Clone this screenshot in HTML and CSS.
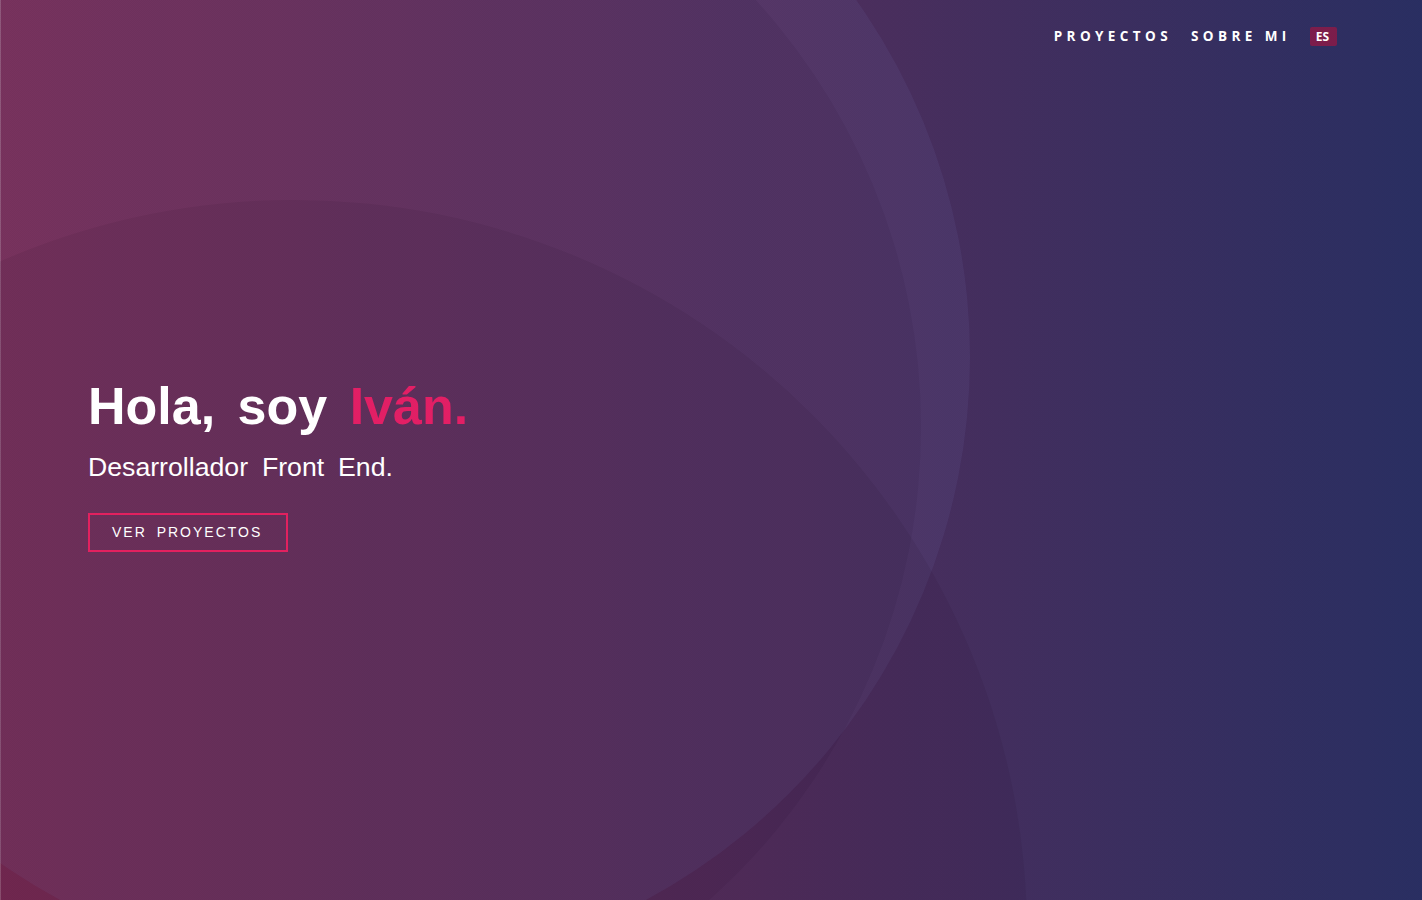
FILE: index.html
```html
<!DOCTYPE html>
<html lang="es">
<head>
<meta charset="utf-8">
<title>Iván — Desarrollador Front End</title>
<link rel="stylesheet" href="styles.css">
</head>
<body>
<section class="hero">
  <div class="shape shape-light"></div>
  <div class="shape shape-shadow"></div>
  <div class="shape shape-big"></div>

  <header class="topbar">
    <nav class="nav">
      <a class="nav-link" href="#proyectos">PROYECTOS</a>
      <a class="nav-link" href="#sobre-mi">SOBRE MI</a>
      <span class="lang">ES</span>
    </nav>
  </header>

  <div class="intro">
    <h1 class="title">Hola, soy <span class="accent">Iván.</span></h1>
    <p class="subtitle">Desarrollador Front End.</p>
    <a class="btn" href="#proyectos">VER PROYECTOS</a>
  </div>
</section>
</body>
</html>
```

FILE: styles.css
```css
* {
  box-sizing: border-box;
}

html, body {
  margin: 0;
  padding: 0;
}

body {
  font-family: "Liberation Sans", Arial, sans-serif;
  color: #fff;
  background: #272f60;
}

.hero {
  position: relative;
  height: 900px;
  overflow: hidden;
  background: linear-gradient(90deg, #7f2e57 0%, #2a2f63 100%);
  box-shadow: inset 1px 0 0 rgba(255, 255, 255, 0.22);
}

.hero::after {
  content: "";
  position: absolute;
  inset: 0;
  pointer-events: none;
  background: repeating-conic-gradient(rgba(0, 0, 0, 0.03) 0 25%, transparent 0 50%) 0 0 / 2px 2px;
}

.shape {
  position: absolute;
  border-radius: 50%;
  pointer-events: none;
}

.shape-light {
  left: -264px;
  top: -260px;
  width: 1234px;
  height: 1234px;
  background: rgba(135, 155, 215, 0.085);
}

.shape-shadow {
  left: -347px;
  top: -207px;
  width: 1268px;
  height: 1268px;
  background: rgba(30, 0, 40, 0.07);
}

.shape-big {
  left: -439px;
  top: 200px;
  width: 1466px;
  height: 1466px;
  background: rgba(30, 0, 25, 0.07);
}

.topbar {
  position: relative;
  z-index: 2;
  display: flex;
  justify-content: flex-end;
  padding: 25px 85px 0 0;
}

.nav {
  display: flex;
  align-items: center;
  height: 21px;
}

.nav-link {
  font-family: "Open Sans", "Liberation Sans", sans-serif;
  font-weight: 700;
  font-size: 13.5px;
  letter-spacing: 4.4px;
  color: #fff;
  text-decoration: none;
  margin-right: 19px;
  line-height: 20px;
}

.lang {
  font-family: "Open Sans", "Liberation Sans", sans-serif;
  font-weight: 700;
  font-size: 12px;
  line-height: 19px;
  padding: 0 8px 0 6px;
  margin-top: 2px;
  background: #7c1d4b;
  border-radius: 2px;
  color: #fff;
}

.intro {
  position: relative;
  z-index: 2;
  padding: 330px 0 0 88px;
  display: flex;
  flex-direction: column;
  align-items: flex-start;
}

.title {
  margin: 0;
  font-size: 52px;
  line-height: 60px;
  font-weight: 700;
  word-spacing: 8px;
  color: #fff;
}

.accent {
  color: #e21f65;
}

.subtitle {
  margin: 15px 0 0;
  font-size: 26.67px;
  line-height: 32px;
  font-weight: 400;
  word-spacing: 6.5px;
}

.btn {
  margin-top: 30px;
  display: inline-block;
  height: 39px;
  line-height: 35px;
  padding: 0 24px 0 22px;
  border: 2px solid #e2215f;
  color: #fff;
  text-decoration: none;
  font-size: 14px;
  letter-spacing: 2px;
  word-spacing: 4px;
}
```
